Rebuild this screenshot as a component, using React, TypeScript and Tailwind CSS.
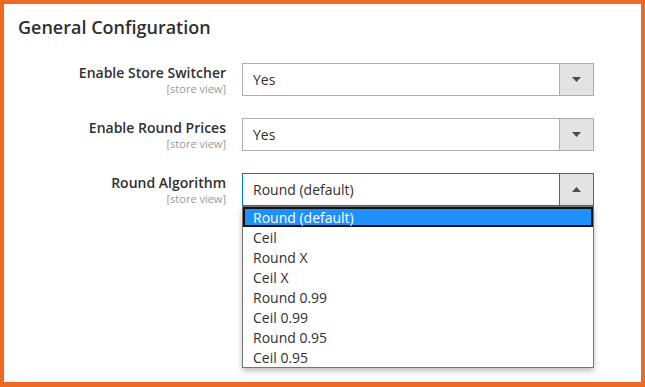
import React from 'react';

const font = { fontFamily: '"Open Sans", "Noto Sans", sans-serif' };

const options = ['Round (default)', 'Ceil', 'Round X', 'Ceil X', 'Round 0.99', 'Ceil 0.99', 'Round 0.95', 'Ceil 0.95'];

function Arrow({ up }: { up?: boolean }) {
  return (
    <svg width="9" height="5" viewBox="0 0 9 5" className="block">
      {up ? <path d="M0 5 L4.5 0 L9 5 Z" fill="#514943" /> : <path d="M0 0 L9 0 L4.5 5 Z" fill="#514943" />}
    </svg>
  );
}

function Row({ label, value, open }: { label: string; value: string; open?: boolean }) {
  return (
    <div className="flex items-start">
      <div className="w-[208px] text-right pt-[1px]">
        <div className="text-[14px] font-semibold leading-[18px] text-[#303030]">{label}</div>
        <div className="text-[11px] leading-[14px] text-[#999999]">[store view]</div>
      </div>
      <div className="relative ml-[16px]">
        <div
          className={
            'flex h-[33px] w-[352px] border bg-white ' +
            (open ? 'border-[#007bdb]' : 'border-[#adadad]')
          }
        >
          <div className="flex-1 pl-[10px] flex items-center text-[14px] text-[#303030]">{value}</div>
          <div
            className={
              'w-[34px] flex items-center justify-center bg-[#e3e3e3] border-l ' +
              (open ? 'border-[#007bdb]' : 'border-[#adadad]')
            }
          >
            <Arrow up={open} />
          </div>
        </div>
        {open && (
          <div className="absolute left-0 top-[33px] w-[352px] border border-[#767676] bg-white shadow-[0_3px_6px_rgba(0,0,0,0.25)] z-10">
            {options.map((o, i) => (
              <div
                key={o}
                className={
                  'h-[20px] flex items-center text-[14px] ' +
                  (i === 0 ? 'bg-[#1e90ff] text-white border-2 border-[#111111] pl-[8px]' : 'pl-[10px] text-[#303030]')
                }
              >
                {o}
              </div>
            ))}
          </div>
        )}
      </div>
    </div>
  );
}

export default function App() {
  return (
    <div style={font} className="w-[645px] h-[387px] bg-white border-4 border-[#ec6a24] border-b-[5px] overflow-hidden">
      <div className="pl-[14px] pt-[12px]">
        <h2 className="text-[18px] font-semibold text-[#303030] leading-[22px]">General Configuration</h2>
        <div className="mt-[25px] flex flex-col gap-[22px]">
          <Row label="Enable Store Switcher" value="Yes" />
          <Row label="Enable Round Prices" value="Yes" />
          <Row label="Round Algorithm" value="Round (default)" open />
        </div>
      </div>
    </div>
  );
}
